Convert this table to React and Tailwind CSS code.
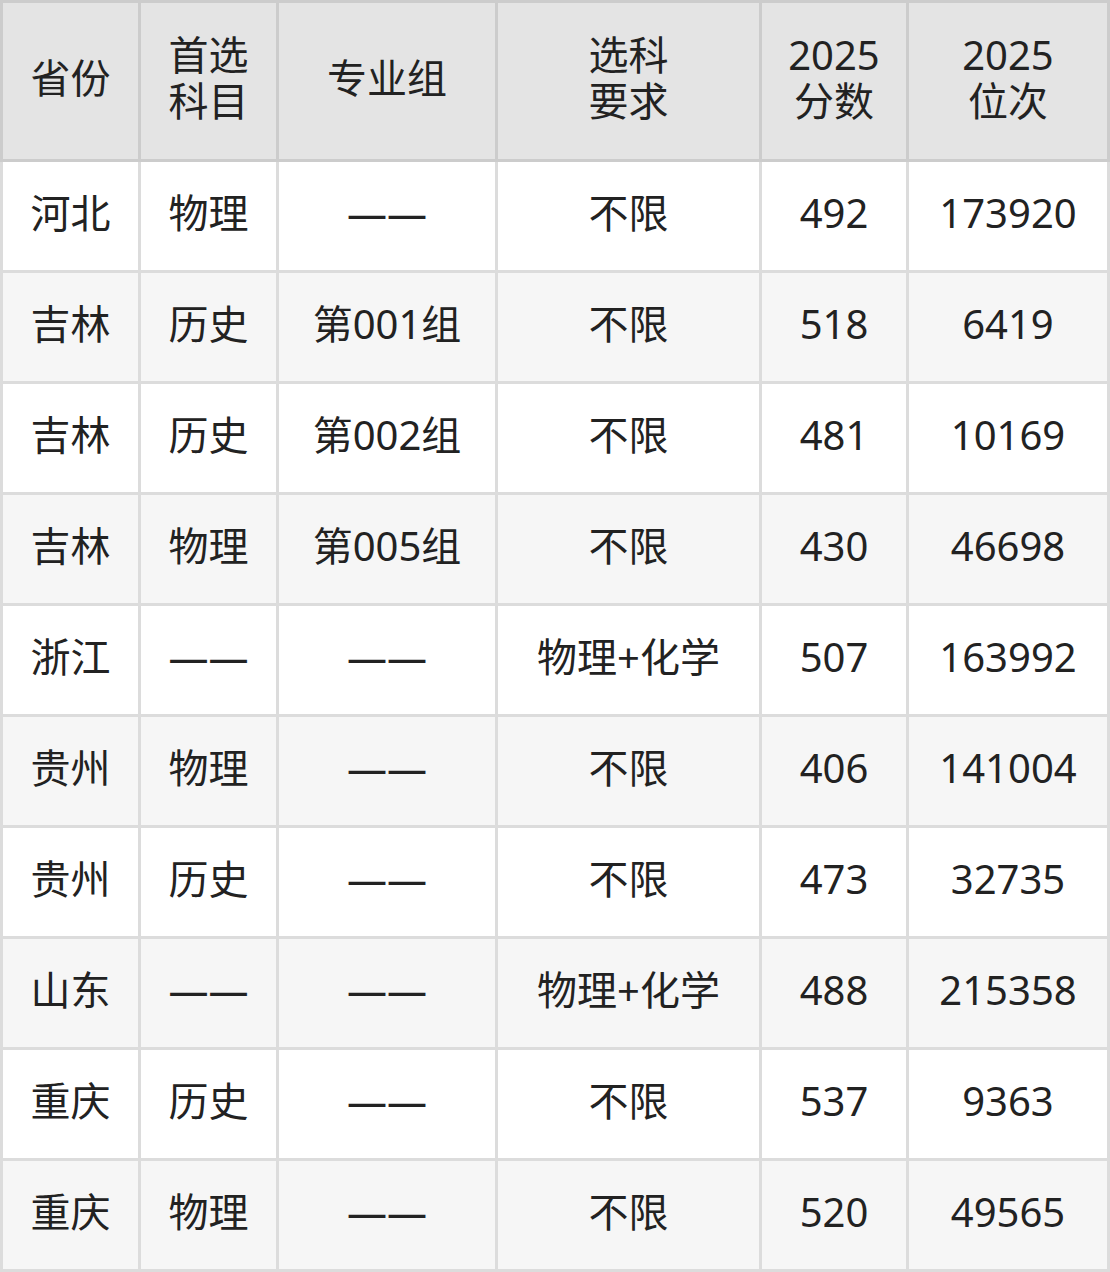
import React from "react";

const rows = [
  ["河北", "物理", "——", "不限", "492", "173920"],
  ["吉林", "历史", "第001组", "不限", "518", "6419"],
  ["吉林", "历史", "第002组", "不限", "481", "10169"],
  ["吉林", "物理", "第005组", "不限", "430", "46698"],
  ["浙江", "——", "——", "物理+化学", "507", "163992"],
  ["贵州", "物理", "——", "不限", "406", "141004"],
  ["贵州", "历史", "——", "不限", "473", "32735"],
  ["山东", "——", "——", "物理+化学", "488", "215358"],
  ["重庆", "历史", "——", "不限", "537", "9363"],
  ["重庆", "物理", "——", "不限", "520", "49565"],
];

const headers = [
  ["省份"],
  ["首选", "科目"],
  ["专业组"],
  ["选科", "要求"],
  ["2025", "分数"],
  ["2025", "位次"],
];

const cols = "grid grid-cols-[135px_135px_216px_261px_144px_198px] gap-[3px]";

export default function App() {
  return (
    <div
      className="w-[1110px] h-[1272px] bg-white text-[#222222] text-[40px]"
      style={{ fontFamily: '"Noto Sans", "Noto Sans CJK SC", sans-serif' }}
    >
      <div className={`${cols} bg-[#cccccc] p-[3px]`}>
        {headers.map((h, i) => (
          <div
            key={i}
            className="h-[156px] pb-[6px] bg-[#e4e4e4] flex flex-col items-center justify-center leading-[46px]"
          >
            {h.map((t, j) => (
              <span key={j} className="block h-[46px]">
                {t}
              </span>
            ))}
          </div>
        ))}
      </div>
      <div className={`${cols} bg-[#dcdcdc] px-[3px] pb-[3px]`}>
        {rows.map((r, ri) =>
          r.map((c, ci) => (
            <div
              key={`${ri}-${ci}`}
              className={`h-[108px] pb-[6px] flex items-center justify-center leading-none ${
                ri % 2 === 0 ? "bg-white" : "bg-[#f6f6f6]"
              }`}
            >
              {c}
            </div>
          ))
        )}
      </div>
    </div>
  );
}
